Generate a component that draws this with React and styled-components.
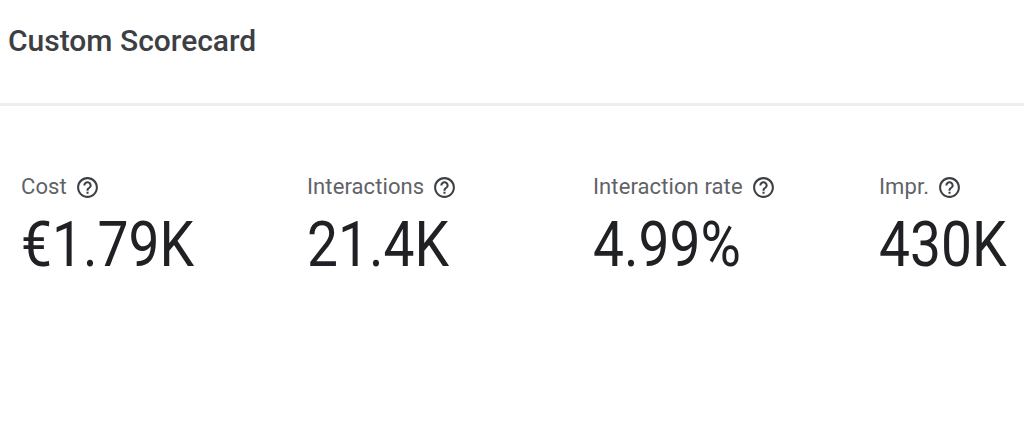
import React from "react";
import styled, { createGlobalStyle } from "styled-components";

const Global = createGlobalStyle`
  html, body { margin: 0; padding: 0; background: #fff; }
  body { font-family: Roboto, "Noto Sans", sans-serif; }
`;

const Card = styled.div`
  width: 1024px;
  height: 427px;
  background: #fff;
  overflow: hidden;
`;

const Header = styled.div`
  height: 106px;
  display: flex;
  align-items: center;
  padding: 0 0 22px 8px;
  box-sizing: border-box;
  border-bottom: 3px solid #eeeeee;
`;

const Title = styled.h1`
  margin: 0;
  font-family: Roboto, sans-serif;
  font-weight: 500;
  font-size: 30px;
  color: #3c4043;
  letter-spacing: 0;
`;

const Metrics = styled.div`
  display: grid;
  grid-template-columns: repeat(4, 286px);
  padding: 68px 0 0 21px;
`;

const Metric = styled.div`
  display: flex;
  flex-direction: column;
  align-items: flex-start;
  gap: 12px;
`;

const Label = styled.div`
  display: flex;
  align-items: center;
  gap: 8px;
  font-size: 22px;
  color: #5f6368;
  line-height: 26px;
  letter-spacing: 0.1px;
`;

const Value = styled.div`
  font-size: 63px;
  line-height: 66px;
  color: #202124;
  font-weight: 400;
  transform: scaleX(0.875);
  transform-origin: left center;
  white-space: nowrap;
`;

const HelpIcon = () => (
  <svg width="25" height="25" viewBox="0 0 24 24" fill="#3c4043">
    <path d="M11 18h2v-2h-2v2zm1-16C6.48 2 2 6.48 2 12s4.48 10 10 10 10-4.48 10-10S17.52 2 12 2zm0 18c-4.41 0-8-3.59-8-8s3.59-8 8-8 8 3.59 8 8-3.59 8-8 8zm0-14c-2.21 0-4 1.79-4 4h2c0-1.1.9-2 2-2s2 .9 2 2c0 2-3 1.75-3 5h2c0-2.250 3-2.5 3-5 0-2.21-1.79-4-4-4z" />
  </svg>
);

const data = [
  { label: "Cost", value: "€1.79K" },
  { label: "Interactions", value: "21.4K" },
  { label: "Interaction rate", value: "4.99%" },
  { label: "Impr.", value: "430K" },
];

export default function App() {
  return (
    <Card>
      <Global />
      <Header>
        <Title>Custom Scorecard</Title>
      </Header>
      <Metrics>
        {data.map((m) => (
          <Metric key={m.label}>
            <Label>
              {m.label}
              <HelpIcon />
            </Label>
            <Value>{m.value}</Value>
          </Metric>
        ))}
      </Metrics>
    </Card>
  );
}
